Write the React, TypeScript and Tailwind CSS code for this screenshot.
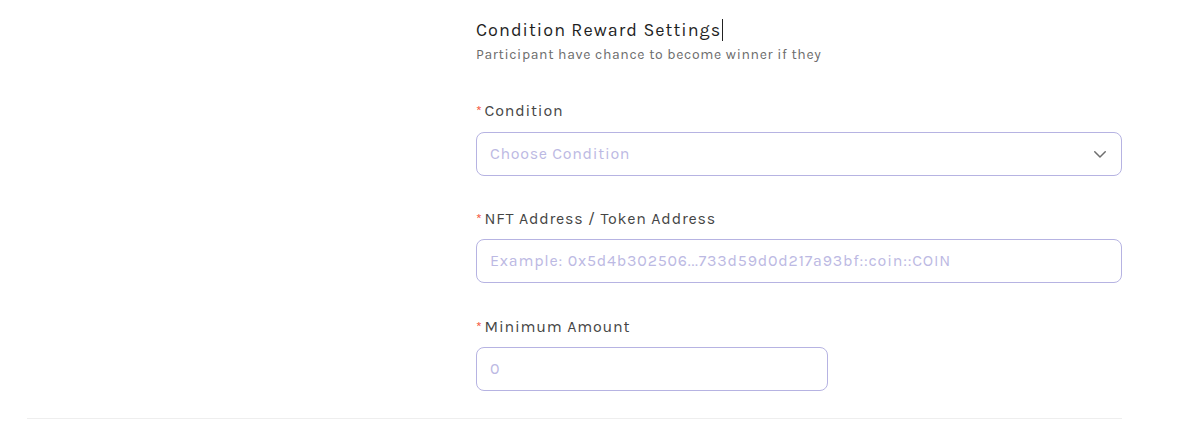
import React from "react";

function Label({ children }: { children: React.ReactNode }) {
  return (
    <div className="flex items-center h-[22px] text-[16px] leading-[22px] text-[#454545] tracking-[0.8px]">
      <span className="text-[#f5543b] text-[14px] leading-[14px] mr-[2px] mt-[2px]">*</span>
      {children}
    </div>
  );
}

export default function App() {
  return (
    <div className="w-[1178px] h-[421px] bg-white overflow-hidden" style={{ fontFamily: '"Karla", "Inter", "Liberation Sans", sans-serif' }}>
      <div className="ml-[27px] w-[1095px] border-b border-[#eeeeee] pb-[27px]">
        <div className="ml-[449px] w-[646px] pt-[18px]">
          <div className="flex items-center h-[24px] text-[18px] leading-[24px] text-[#1f1f1f] tracking-[1.05px]">
            Condition Reward Settings
            <span className="inline-block w-px h-[22px] bg-[#222] ml-[1px]" />
          </div>
          <div className="mt-[3px] text-[14px] leading-[20px] text-[#6b6b6b] tracking-[0.65px]">
            Participant have chance to become winner if they
          </div>

          <div className="mt-[35px]">
            <Label>Condition</Label>
            <div className="mt-[10px] h-[44px] border border-[#b6b3e2] rounded-[8px] flex items-center justify-between pl-[13px] pr-[12px]">
              <span className="text-[16px] text-[#bcb9e3] tracking-[0.7px]">Choose Condition</span>
              <svg width="18" height="18" viewBox="0 0 24 24" fill="none" stroke="#6e6e6e" strokeWidth="2" strokeLinecap="round" strokeLinejoin="round">
                <path d="M5 9l7 7 7-7" />
              </svg>
            </div>
          </div>

          <div className="mt-[32px]">
            <Label>NFT Address / Token Address</Label>
            <div className="mt-[9px] h-[44px] border border-[#b6b3e2] rounded-[8px] flex items-center pl-[13px]">
              <span className="text-[16px] text-[#bcb9e3] tracking-[0.8px]">Example: 0x5d4b302506...733d59d0d217a93bf::coin::COIN</span>
            </div>
          </div>

          <div className="mt-[33px]">
            <Label>Minimum Amount</Label>
            <div className="mt-[9px] w-[352px] h-[44px] border border-[#b6b3e2] rounded-[8px] flex items-center pl-[13px]">
              <span className="text-[16px] text-[#bcb9e3]">0</span>
            </div>
          </div>
        </div>
      </div>
    </div>
  );
}
